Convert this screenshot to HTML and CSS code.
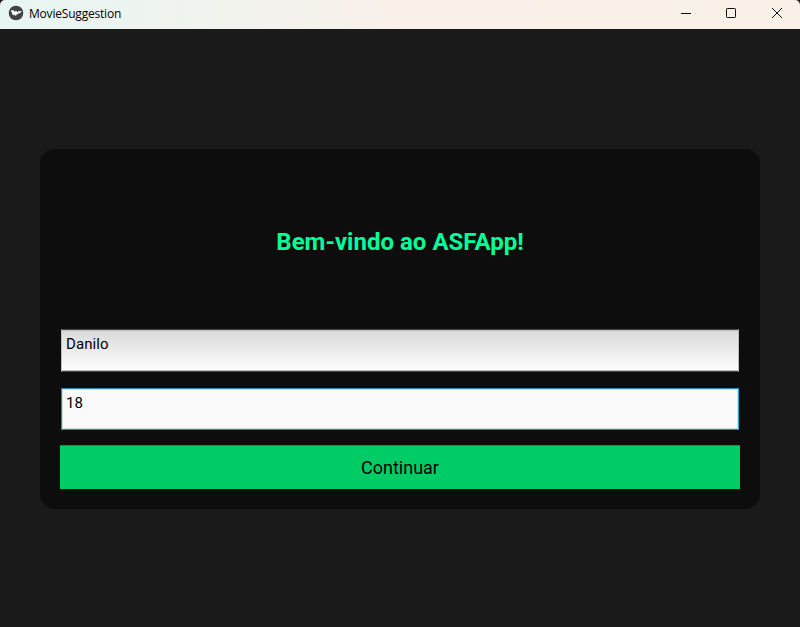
FILE: index.html
```html
<!DOCTYPE html>
<html lang="pt-BR">
<head>
<meta charset="utf-8">
<title>MovieSuggestion</title>
<link rel="stylesheet" href="styles.css">
</head>
<body>
<header class="titlebar">
  <svg class="logo" viewBox="0 0 16 16"><circle cx="8" cy="8" r="7.3" fill="#3f4344"/><path d="M2.8 5.3h2.7l1.6 1.6.6-1.4 1.7 1.6-1.7 3.8-1.5-1.5-1.2 1zM8.8 8.3l1.5-2.1 3.5-.3-1.9 2.3-2.3.6-1.2 2z" fill="#fff"/></svg>
  <h1 class="name">MovieSuggestion</h1>
  <div class="controls">
    <svg viewBox="0 0 46 29"><path d="M18 13.5h10"/></svg>
    <svg viewBox="0 0 46 29"><rect x="18.5" y="8.5" width="9" height="9" rx=".7"/></svg>
    <svg viewBox="0 0 46 29"><path d="M18 8l10 10M28 8L18 18"/></svg>
  </div>
</header>
<main class="screen">
  <form class="card">
    <h2 class="welcome">Bem-vindo ao ASFApp!</h2>
    <div class="field">Danilo</div>
    <div class="field focused">18</div>
    <button class="submit" type="button">Continuar</button>
  </form>
</main>
</body>
</html>
```
FILE: styles.css
```css
* { box-sizing: border-box; }
html { background: #1a1a1a; }
body { margin: 0; height: 627px; display: flex; flex-direction: column; overflow: hidden; background: #1a1a1a; font-family: Roboto, sans-serif; }
.titlebar { height: 29px; flex: none; display: flex; background: linear-gradient(90deg, #e7f6f3, #f9f0e9 50%, #f9f1e7); border-radius: 5px 5px 0 0; }
.logo { width: 16px; height: 16px; margin: 5px 5px 0 8px; }
.name { margin: 0; font: 400 12px/28px "Open Sans", sans-serif; letter-spacing: -.2px; color: #000; }
.controls { margin-left: auto; display: flex; }
.controls svg { flex: none; width: 46px; height: 29px; fill: none; stroke: #111; stroke-width: 1; }
.controls svg:first-child { margin-right: -1px; }
.screen { flex: 1; padding: 120px 40px 118px; }
.card { height: 360px; padding: 20px; border-radius: 15px; background: #0d0d0d; display: flex; flex-direction: column; }
.welcome { flex: none; margin: 0; height: 160px; line-height: 146px; text-align: center; font-size: 24px; font-weight: 700; letter-spacing: .02px; color: #00ff99; }
.field { flex: none; height: 43px; margin: 0 1px 16px; padding: 5px 4px; border: 1px solid #bbb; border-top-color: #484848; border-bottom-color: #484848; background: linear-gradient(#d9d9d9, #fefefe) padding-box; box-shadow: inset 0 1px #bbb, inset 0 -1px #bbb; font-size: 15px; line-height: 18px; letter-spacing: .08px; color: #000; }
.focused { height: 42px; margin-bottom: 15px; border-color: #2f87aa #3aa5d8 #2f87aa #2f87aa; background: #fafafa; box-shadow: inset 0 0 0 1px #cfdde3; letter-spacing: 0; }
.submit { flex: none; height: 44px; margin: 0; padding: 0; border: 0; background: #00cc66; box-shadow: inset 0 1px #079a50; color: #000; font: 400 18px Roboto, sans-serif; }
```
